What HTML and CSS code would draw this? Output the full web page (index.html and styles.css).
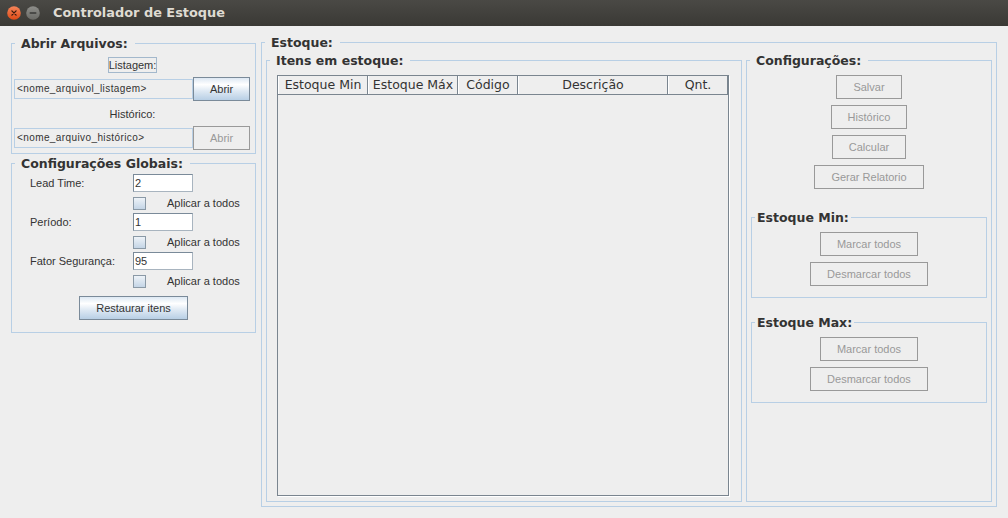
FILE: index.html
```html
<!DOCTYPE html>
<html lang="pt">
<head>
<meta charset="utf-8">
<title>Controlador de Estoque</title>
<link rel="stylesheet" href="styles.css">
</head>
<body>
<div class="window">
  <header class="titlebar">
    <span class="wm-btn wm-close">
      <svg width="14" height="14" viewBox="0 0 14 14">
        <defs>
          <linearGradient id="gclose" x1="0" y1="0" x2="0" y2="1">
            <stop offset="0" stop-color="#f5855a"/>
            <stop offset="1" stop-color="#df4a16"/>
          </linearGradient>
        </defs>
        <circle cx="7" cy="7" r="6.8" fill="url(#gclose)"/>
        <path d="M4.9 4.9 L9.1 9.1 M9.1 4.9 L4.9 9.1" stroke="#3a1a0e" stroke-width="1.3" stroke-linecap="round"/>
      </svg>
    </span>
    <span class="wm-btn wm-min">
      <svg width="14" height="14" viewBox="0 0 14 14">
        <defs>
          <linearGradient id="gmin" x1="0" y1="0" x2="0" y2="1">
            <stop offset="0" stop-color="#8e8e8a"/>
            <stop offset="1" stop-color="#6a6a66"/>
          </linearGradient>
        </defs>
        <circle cx="7" cy="7" r="6.8" fill="url(#gmin)"/>
        <path d="M4.2 7 H9.8" stroke="#3a3a38" stroke-width="1.4" stroke-linecap="round"/>
      </svg>
    </span>
    <span class="wm-title">Controlador de Estoque</span>
  </header>

  <main class="main">
    <div class="left-col">
      <fieldset class="group files">
        <legend>Abrir Arquivos:</legend>
        <div class="files-body">
          <span class="lbl-focus">Listagem:</span>
          <div class="file-row">
            <div class="file-field">&lt;nome_arquivol_listagem&gt;</div>
            <button class="btn" type="button">Abrir</button>
          </div>
          <span class="lbl-center">Histórico:</span>
          <div class="file-row">
            <div class="file-field">&lt;nome_arquivo_histórico&gt;</div>
            <button class="btn" type="button" disabled>Abrir</button>
          </div>
        </div>
      </fieldset>

      <fieldset class="group globals">
        <legend>Configurações Globais:</legend>
        <div class="globals-body">
          <div class="g-rows">
            <div class="g-row">
              <span class="g-label">Lead Time:</span>
              <div class="g-field">2</div>
            </div>
            <div class="g-check">
              <span class="checkbox"></span>
              <span class="check-text">Aplicar a todos</span>
            </div>
            <div class="g-row">
              <span class="g-label">Período:</span>
              <div class="g-field">1</div>
            </div>
            <div class="g-check">
              <span class="checkbox"></span>
              <span class="check-text">Aplicar a todos</span>
            </div>
            <div class="g-row">
              <span class="g-label">Fator Segurança:</span>
              <div class="g-field">95</div>
            </div>
            <div class="g-check">
              <span class="checkbox"></span>
              <span class="check-text">Aplicar a todos</span>
            </div>
          </div>
          <div class="restore-row">
            <button class="btn" type="button">Restaurar itens</button>
          </div>
        </div>
      </fieldset>
    </div>

    <fieldset class="group estoque">
      <legend>Estoque:</legend>
      <div class="estoque-row">
        <fieldset class="group itens">
          <legend>Itens em estoque:</legend>
          <div class="itens-body">
            <div class="table">
              <div class="thead">
                <div class="th w90">Estoque Min</div>
                <div class="th w90">Estoque Máx</div>
                <div class="th w60">Código</div>
                <div class="th w150">Descrição</div>
                <div class="th w60">Qnt.</div>
              </div>
              <div class="tbody"></div>
            </div>
          </div>
        </fieldset>

        <fieldset class="group config">
          <legend>Configurações:</legend>
          <div class="config-body">
            <div class="btn-stack">
              <button class="btn" type="button" disabled>Salvar</button>
              <button class="btn" type="button" disabled>Histórico</button>
              <button class="btn" type="button" disabled>Calcular</button>
              <button class="btn" type="button" disabled>Gerar Relatorio</button>
            </div>
            <fieldset class="group sub sub-min">
              <legend>Estoque Min:</legend>
              <div class="btn-stack sub-body">
                <button class="btn" type="button" disabled>Marcar todos</button>
                <button class="btn" type="button" disabled>Desmarcar todos</button>
              </div>
            </fieldset>
            <fieldset class="group sub sub-max">
              <legend>Estoque Max:</legend>
              <div class="btn-stack sub-body">
                <button class="btn" type="button" disabled>Marcar todos</button>
                <button class="btn" type="button" disabled>Desmarcar todos</button>
              </div>
            </fieldset>
          </div>
        </fieldset>
      </div>
    </fieldset>
  </main>
</div>
</body>
</html>
```

FILE: styles.css
```css
* { box-sizing: border-box; }

html, body {
  margin: 0;
  padding: 0;
}

body {
  width: 1008px;
  height: 518px;
  overflow: hidden;
  background: #eeeeee;
  font-family: "Liberation Sans", Arial, sans-serif;
  font-size: 11px;
  color: #333333;
}

.window {
  width: 1008px;
  height: 518px;
  background: #eeeeee;
}

/* ---------- title bar ---------- */
.titlebar {
  height: 26px;
  display: flex;
  align-items: center;
  padding-left: 7px;
  background: linear-gradient(#4a4945, #3a3935);
}

.wm-btn {
  display: block;
  width: 14px;
  height: 14px;
}
.wm-btn svg { display: block; }
.wm-min { margin-left: 5px; }

.wm-title {
  margin-left: 13px;
  font-family: "DejaVu Sans", sans-serif;
  font-weight: bold;
  font-size: 12.9px;
  line-height: 16px;
  color: #dfdbd2;
}

/* ---------- main layout ---------- */
.main {
  display: flex;
  align-items: flex-start;
  padding: 8px 0 0 11px;
}

.left-col {
  width: 245px;
  margin-top: 1px;
  display: flex;
  flex-direction: column;
}

/* ---------- titled groups ---------- */
.group {
  margin: 0;
  padding: 0;
  min-inline-size: 0;
  border: 1px solid #b8cfe5;
}

.group > legend {
  margin-left: 3px;
  padding: 0 7px 0 6px;
  font-family: "DejaVu Sans", sans-serif;
  font-weight: bold;
  font-size: 12.5px;
  line-height: 17px;
  color: #333333;
}

/* ---------- Abrir Arquivos ---------- */
.files-body {
  display: flex;
  flex-direction: column;
  padding: 5px 4px 3px 2px;
}

.lbl-focus {
  align-self: center;
  height: 16px;
  line-height: 14px;
  padding: 0;
  border: 1px solid #a3b8cc;
  white-space: nowrap;
}

.lbl-center {
  margin-top: 5px;
  height: 16px;
  line-height: 16px;
  text-align: center;
}

.file-row {
  margin-top: 4px;
  height: 24px;
  display: flex;
  align-items: center;
}

.file-field {
  width: 179px;
  height: 20px;
  border: 1px solid #b8cfe5;
  padding-left: 2px;
  font-size: 10px;
  letter-spacing: 0.4px;
  line-height: 18px;
  white-space: nowrap;
  overflow: hidden;
}

/* ---------- buttons ---------- */
.btn {
  height: 24px;
  padding: 0 16px;
  margin: 0;
  border: 1px solid #7a8a99;
  border-radius: 0;
  background: linear-gradient(to bottom, #dde8f3 0%, #ffffff 30%, #dde8f3 60%, #b8cfe5 100%);
  font-family: "Liberation Sans", Arial, sans-serif;
  font-size: 11px;
  line-height: 22px;
  color: #333333;
  white-space: nowrap;
}

.btn:disabled {
  border-color: #999999;
  background: #eeeeee;
  color: #999999;
}

/* ---------- Configurações Globais ---------- */
.globals {
  margin-top: 1px;
}

.globals-body {
  display: flex;
  flex-direction: column;
  padding: 2px 0 12px 0;
}

.g-rows {
  display: flex;
  flex-direction: column;
  padding-left: 18px;
}

.g-row {
  height: 18px;
  display: flex;
  align-items: center;
}
.g-check + .g-row { margin-top: 3px; }

.g-label {
  width: 103px;
  white-space: nowrap;
}

.g-field {
  width: 60px;
  height: 18px;
  background: #ffffff;
  border: 1px solid #7a8a99;
  border-right-color: #a8b4bf;
  border-bottom-color: #a8b4bf;
  padding-left: 1px;
  line-height: 16px;
}

.g-check {
  margin-top: 5px;
  height: 13px;
  display: flex;
  align-items: center;
  padding-left: 103px;
}

.checkbox {
  width: 13px;
  height: 13px;
  border: 1px solid #8a99a6;
  background: linear-gradient(to bottom, #eef3f8, #c4d5e6);
}

.check-text {
  margin-left: 21px;
  line-height: 13px;
  white-space: nowrap;
}

.restore-row {
  margin-top: 8px;
  display: flex;
  justify-content: center;
}

/* ---------- Estoque ---------- */
.estoque {
  margin-left: 5px;
  width: 736px;
  height: 473px;
  padding: 0 4px 4px 4px;
}

.estoque > legend {
  margin-left: -1px;
}

.estoque-row {
  margin-top: 1px;
  display: flex;
  gap: 4px;
}

.itens {
  width: 476px;
  height: 450px;
}

.itens-body {
  padding: 6px 12px 5px 10px;
}

.table {
  width: 452px;
  height: 421px;
  border: 1px solid #7a858f;
  box-shadow: 1px 1px 0 #ffffff;
  display: flex;
  flex-direction: column;
}

.thead {
  display: flex;
  height: 19px;
  border-bottom: 1px solid #7a858f;
}

.th {
  height: 18px;
  border-left: 1px solid #ffffff;
  border-right: 1px solid #7a858f;
  font-family: "DejaVu Sans", sans-serif;
  font-size: 12.5px;
  line-height: 18px;
  text-align: center;
  white-space: nowrap;
  overflow: hidden;
  color: #333333;
}
.w90 { width: 90px; }
.w60 { width: 60px; }
.w150 { width: 150px; }

.tbody {
  flex: 1;
  background: #eeeeee;
}

/* ---------- Configurações (right) ---------- */
.config {
  width: 246px;
  height: 450px;
}

.config-body {
  display: flex;
  flex-direction: column;
  padding-top: 6px;
}

.btn-stack {
  display: flex;
  flex-direction: column;
  align-items: center;
  gap: 6px;
}

.sub {
  margin: 20px 4px 0 4px;
}
.sub-max { margin-top: 16px; }

.sub > legend {
  margin-left: 3px;
  padding: 0 2px;
}

.sub-body {
  padding: 6px 0 11px 0;
}
```
